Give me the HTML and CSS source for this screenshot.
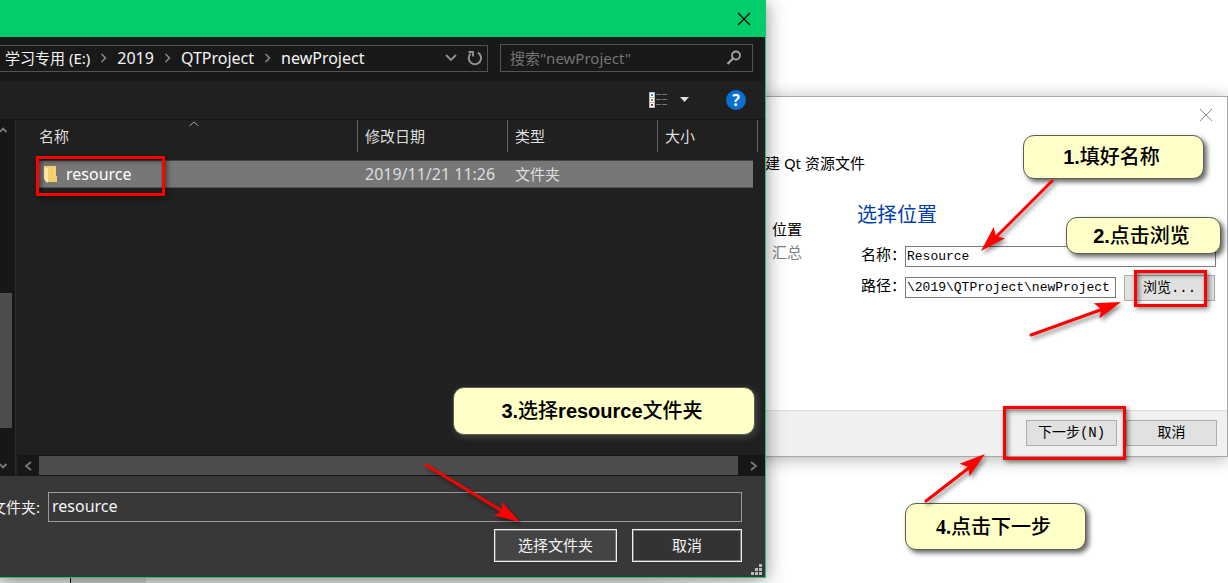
FILE: index.html
```html
<!DOCTYPE html>
<html lang="zh-CN">
<head>
<meta charset="utf-8">
<title>新建 Qt 资源文件</title>
<link rel="stylesheet" href="styles.css">
</head>
<body>
<main class="desktop">
  <div class="backdrop"><span class="backdrop-tab"></span></div>

  <section class="wizard" aria-label="新建 Qt 资源文件">
    <header class="wizard-top">
      <button class="icon-button" aria-label="关闭">
        <svg width="14" height="14" viewBox="0 0 14 14"><path d="M1 1l12 12M13 1L1 13" stroke="#8a8a8a" fill="none"/></svg>
      </button>
    </header>
    <h1 class="wizard-title">新建 Qt 资源文件</h1>
    <div class="wizard-body">
      <ol class="steps">
        <li>位置</li>
        <li class="step-pending">汇总</li>
      </ol>
      <form class="page">
        <h2 class="page-title">选择位置</h2>
        <div class="field">
          <label for="res-name">名称：</label>
          <input id="res-name" class="text-input" type="text" value="Resource">
        </div>
        <div class="field">
          <label for="res-path">路径：</label>
          <input id="res-path" class="text-input" type="text" value="\2019\QTProject\newProject">
          <button type="button" class="push-button">浏览...</button>
        </div>
      </form>
    </div>
    <footer class="wizard-footer">
      <button class="push-button">下一步(N)</button>
      <button class="push-button">取消</button>
    </footer>
  </section>

  <section class="picker" aria-label="选择文件夹">
    <header class="picker-title">
      <button class="icon-button" aria-label="关闭">
        <svg width="14" height="14" viewBox="0 0 14 14"><path d="M1 1l12 12M13 1L1 13" stroke="#000" stroke-width="1.2" fill="none"/></svg>
      </button>
    </header>
    <div class="address-row">
      <nav class="address" aria-label="路径">
        <a class="drive" href="#e">学习专用 (E:)</a>
        <svg class="crumb-sep" width="7" height="10" viewBox="0 0 7 10"><path d="M1.500 1l4 4-4 4" stroke="#8c8c8c" stroke-width="1.500" fill="none"/></svg>
        <a href="#2019">2019</a>
        <svg class="crumb-sep" width="7" height="10" viewBox="0 0 7 10"><path d="M1.500 1l4 4-4 4" stroke="#8c8c8c" stroke-width="1.500" fill="none"/></svg>
        <a href="#qt">QTProject</a>
        <svg class="crumb-sep" width="7" height="10" viewBox="0 0 7 10"><path d="M1.500 1l4 4-4 4" stroke="#8c8c8c" stroke-width="1.500" fill="none"/></svg>
        <a href="#new">newProject</a>
        <span class="address-tools">
          <button class="icon-button" aria-label="历史">
            <svg width="12" height="8" viewBox="0 0 12 8"><path d="M1 1l5 5 5-5" stroke="#929292" stroke-width="1.800" fill="none"/></svg>
          </button>
          <button class="icon-button" aria-label="刷新">
            <svg width="16" height="16" viewBox="0 0 16 16"><path d="M11 2.700A6.200 6.200 0 1 1 3.500 3.700" stroke="#929292" stroke-width="2" fill="none"/><path d="M1.500 2H6v4.500" stroke="#929292" stroke-width="1.800" fill="none"/></svg>
          </button>
        </span>
      </nav>
      <div class="search">
        <input type="search" aria-label="搜索" placeholder="搜索&quot;newProject&quot;">
        <svg width="16" height="16" viewBox="0 0 16 16"><circle cx="10" cy="5.500" r="4" stroke="#a5a5a5" stroke-width="1.800" fill="none"/><path d="M7 8.500L1.500 14" stroke="#a5a5a5" stroke-width="2.200"/></svg>
      </div>
    </div>
    <div class="toolbar">
      <button class="icon-button" aria-label="更改视图">
        <svg width="19" height="16" viewBox="0 0 19 16"><path d="M0 0h6v16H0z" fill="#b9b9b9"/><path d="M1 1h4v4H1zM1 6h4v4H1zM1 11h4v4H1z" fill="#fff"/><path d="M2 2h2v2H2z" fill="#3d83c4"/><path d="M2 7h2v2H2z" fill="#8a8f3a"/><path d="M2 12h2v2H2z" fill="#b5302a"/><path d="M7 2.500h5M13 2.500h5M7 7.500h5M13 7.500h5M7 12.500h5M13 12.500h5" stroke="#777"/></svg>
      </button>
      <button class="icon-button" aria-label="更多选项">
        <svg width="10" height="6" viewBox="0 0 10 6"><path d="M0 0h9L4.500 5z" fill="#dedede"/></svg>
      </button>
      <button class="help" aria-label="帮助">?</button>
    </div>
    <div class="browser">
      <div class="tree-scroll">
        <svg width="8" height="6" viewBox="0 0 8 6"><path d="M0 4.800L3 1.500l3.500 3.500" stroke="#7b7b7b" stroke-width="1.800" fill="none"/></svg>
        <span class="tree-thumb"></span>
        <svg width="8" height="6" viewBox="0 0 8 6"><path d="M0 1.200L3 4.500 6.500 1" stroke="#7b7b7b" stroke-width="1.800" fill="none"/></svg>
      </div>
      <div class="listing">
        <table class="files">
          <colgroup><col class="col-name"><col class="col-mid"><col class="col-mid"><col><col class="col-gutter"></colgroup>
          <thead>
            <tr>
              <th class="sorted">名称<svg class="sort-mark" width="10" height="6" viewBox="0 0 10 6"><path d="M.5 5l4.500-4 4.500 4" stroke="#a5a5a5" fill="none"/></svg></th>
              <th>修改日期</th><th>类型</th><th colspan="2">大小</th>
            </tr>
          </thead>
          <tbody>
            <tr>
              <td>
                <span class="file-name">
                  <svg width="14" height="18" viewBox="0 0 14 18"><path d="M0 1h12v10h1v6H4z" fill="#f3cf6b"/><path d="M0 1l4 3v14l-3-2V15L0 14z" fill="#ffe9a6"/><path d="M10 1h1v10h-1z" fill="#fbdc82"/></svg>
                  resource
                </span>
              </td>
              <td class="file-date">2019/11/21 11:26</td><td>文件夹</td><td></td><td class="gutter"></td>
            </tr>
          </tbody>
        </table>
        <div class="list-scroll">
          <svg width="8" height="10" viewBox="0 0 8 10"><path d="M7 1L2 5l5 4" stroke="#7b7b7b" stroke-width="1.800" fill="none"/></svg>
          <span class="list-thumb"></span>
          <svg width="8" height="10" viewBox="0 0 8 10"><path d="M1 1l5 4-5 4" stroke="#7b7b7b" stroke-width="1.800" fill="none"/></svg>
        </div>
      </div>
    </div>
    <footer class="picker-footer">
      <div class="folder-field">
        <label for="folder">文件夹:</label>
        <input id="folder" type="text" value="resource">
      </div>
      <div class="picker-actions">
        <button class="dark-button primary">选择文件夹</button>
        <button class="dark-button">取消</button>
      </div>
      <svg class="grip" width="12" height="12" viewBox="0 0 12 12"><path d="M8 0h3v3H8zM4 4h3v3H4zM8 4h3v3H8zM0 8h3v3H0zM4 8h3v3H4zM8 8h3v3H8z" fill="#bcbcbc"/></svg>
    </footer>
  </section>

  <span class="mark mark-folder"></span>
  <span class="mark mark-browse"></span>
  <span class="mark mark-next"></span>

  <p class="callout callout-name"><span><b>1.</b>填好名称</span></p>
  <p class="callout callout-browse"><span><b>2.</b>点击浏览</span></p>
  <p class="callout callout-folder"><span><b>3.</b>选择<b>resource</b>文件夹</span></p>
  <p class="callout callout-next"><span><b>4.</b>点击下一步</span></p>

  <svg class="arrows" width="1228" height="583" viewBox="0 0 1228 583" aria-hidden="true">
    <defs><path id="head" d="M0 0L-26-8-21 0-26 8z"/></defs>
    <g fill="#f00" stroke="none">
      <use href="#head" transform="translate(981 251) rotate(135)"/>
      <use href="#head" transform="translate(1121 302) rotate(-20)"/>
      <use href="#head" transform="translate(520 522) rotate(31)"/>
      <use href="#head" transform="translate(985 454) rotate(-38)"/>
    </g>
    <path d="M1052 181L996 237M1031 335L1103 309M426 465L502 511M926 501L970 467" stroke="#f00" stroke-width="3" stroke-linecap="round" fill="none"/>
  </svg>
</main>
</body>
</html>
```
FILE: styles.css
```css
* { box-sizing: border-box; }

body {
  margin: 0;
  background: #fff;
  font-family: "Noto Sans", "Noto Sans CJK SC", sans-serif;
  font-size: 15px;
  line-height: 20px;
}

h1, h2, p, ol { margin: 0; padding: 0; font-weight: normal; }
ol { list-style: none; }
button, input { font: inherit; color: inherit; margin: 0; border-radius: 0; }
a { color: inherit; text-decoration: none; }
svg { display: block; flex: none; }

.desktop {
  position: relative;
  min-height: 100vh;
  overflow: hidden;
}

.icon-button {
  display: flex;
  padding: 0;
  border: 0;
  background: none;
}

.backdrop {
  position: absolute;
  left: 0;
  bottom: 0;
  width: 750px;
  height: 6px;
  padding-left: 70px;
  background: linear-gradient(to right, #e9e9e9 85%, #fff);
}
.backdrop-tab {
  display: block;
  width: 76px;
  height: 6px;
  border-left: 1px solid #111;
  background: #d0d0d0;
}

/* Wizard window */
.wizard {
  position: absolute;
  left: 748px;
  top: 96px;
  width: 480px;
  border: 1px solid #a8a8a8;
  background: #fff;
  box-shadow: 0 2px 16px rgba(0, 0, 0, .3);
}
.wizard-top {
  display: flex;
  justify-content: flex-end;
  padding: 11px 14px 0;
}
.wizard-title {
  padding: 31px 0 0 1px;
  font-size: 15px;
  line-height: 20px;
}
.wizard-body {
  display: flex;
  gap: 55px;
  padding: 30px 11px 0 23px;
  font-family: "Liberation Mono", "Noto Sans CJK SC", monospace;
}
.steps {
  padding-top: 17px;
  line-height: 23px;
}
.step-pending { color: #808080; }
.page { flex: 1; }
.page-title {
  margin-bottom: 10px;
  color: #003fad;
  font-size: 20px;
  line-height: 28px;
}
.field {
  display: flex;
  align-items: center;
  height: 31px;
  padding-left: 4px;
}
.field label { width: 44px; white-space: nowrap; }
.text-input {
  flex: 1;
  min-width: 0;
  height: 21px;
  padding: 0 1px;
  border: 1px solid #7a7a7a;
  background: #fff;
  font-size: 13px;
}
.push-button {
  width: 91px;
  height: 26px;
  padding: 0;
  border: 1px solid #adadad;
  background: #e1e1e1;
  font-size: 14px;
}
.field .push-button { margin: 0 1px 0 8px; }
.wizard-footer {
  display: flex;
  justify-content: flex-end;
  gap: 9px;
  margin-top: 107px;
  padding: 9px 10px 10px;
  border-top: 1px solid #dfdfdf;
  background: #f0f0f0;
  font-family: "Liberation Mono", "Noto Sans CJK SC", monospace;
}

/* Folder picker window */
.picker {
  position: absolute;
  left: 0;
  top: 0;
  width: 766px;
  border: solid #2bbd78;
  border-width: 0 1px 1px 0;
  background: #202020;
  color: #f5f5f5;
  box-shadow: 0 2px 18px rgba(0, 0, 0, .45);
}
.picker-title {
  display: flex;
  align-items: center;
  justify-content: flex-end;
  height: 37px;
  padding-right: 14px;
  background: #03cd6b;
}
.address-row {
  display: flex;
  align-items: center;
  gap: 12px;
  height: 44px;
  padding: 0 12px 2px 0;
  background: #191919;
}
.address {
  display: flex;
  flex: 1;
  align-items: center;
  height: 27px;
  padding: 0 4px 1px 5px;
  border: solid #535353;
  border-width: 1px 1px 1px 0;
  font-size: 16px;
  white-space: nowrap;
}
.address .drive { font-size: 15px; }
.crumb-sep { margin: 0 10px; }
.address-tools {
  display: flex;
  align-items: center;
  gap: 10px;
  margin-left: auto;
}
.search {
  display: flex;
  align-items: center;
  width: 253px;
  height: 28px;
  padding: 0 10px 0 9px;
  border: 1px solid #535353;
}
.search input {
  flex: 1;
  min-width: 0;
  padding: 0;
  border: 0;
  outline: 0;
  background: none;
}
.search input::placeholder { color: #747474; opacity: 1; }
.toolbar {
  display: flex;
  align-items: center;
  justify-content: flex-end;
  height: 39px;
  padding-right: 19px;
  border-bottom: 1px solid #171717;
}
.toolbar .icon-button { margin-right: 12px; }
.help {
  width: 20px;
  height: 20px;
  margin-left: 24px;
  padding: 0;
  border: 0;
  border-radius: 50%;
  background: #0a6fd0;
  color: #fff;
  font-size: 16px;
  font-weight: bold;
  line-height: 20px;
}
.browser {
  display: flex;
  height: 356px;
}
.tree-scroll {
  display: flex;
  flex-direction: column;
  width: 16px;
  padding: 7px 0;
  border-right: 1px solid #2b2b2b;
  background: #171717;
}
.tree-thumb {
  width: 12px;
  height: 135px;
  margin: auto 0 35px;
  background: #4d4d4d;
}
.listing {
  display: flex;
  flex: 1;
  flex-direction: column;
  justify-content: space-between;
}
.files {
  width: 721px;
  margin-left: 21px;
  border-spacing: 0;
  table-layout: fixed;
}
.col-name { width: 321px; }
.col-mid { width: 150px; }
.col-gutter { width: 5px; }
.files th {
  height: 32px;
  padding: 0 0 0 7px;
  border-right: 1px solid #636363;
  color: #dedede;
  font-weight: normal;
  text-align: left;
}
.files th.sorted { position: relative; padding-left: 2px; }
.sort-mark { position: absolute; left: 152px; top: 1px; }
.files tbody::before {
  display: block;
  height: 8px;
  content: "";
}
.files td {
  height: 28px;
  padding: 0 0 0 7px;
  border-top: 1px solid #444;
  border-bottom: 1px solid #555;
  background: #777;
  color: #dedede;
  white-space: nowrap;
}
.files td.gutter {
  padding: 0;
  border: 0;
  background: none;
}
.file-name {
  display: flex;
  align-items: center;
  gap: 8px;
  color: #fff;
}
.file-name, .files .file-date { font-size: 16px; }
.list-scroll {
  display: flex;
  align-items: center;
  height: 21px;
  margin-left: 2px;
  padding: 0 7px 0 6px;
  border: solid #151515;
  border-width: 1px 0;
  background: #171717;
}
.list-thumb {
  flex: 1;
  align-self: stretch;
  margin: 0 12px 0 7px;
  background: #4d4d4d;
}
.picker-footer {
  position: relative;
  padding: 16px 23px 15px 0;
  background: #383838;
}
.folder-field { display: flex; align-items: center; }
.folder-field label {
  display: flex;
  justify-content: flex-end;
  width: 40px;
  margin-right: 8px;
  white-space: nowrap;
}
.folder-field input {
  flex: 1;
  height: 30px;
  padding: 0 3px 3px;
  border: 1px solid #9b9b9b;
  background: #383838;
  font-size: 16px;
}
.picker-actions {
  display: flex;
  justify-content: flex-end;
  gap: 15px;
  margin-top: 7px;
}
.dark-button {
  width: 110px;
  height: 33px;
  padding: 0 0 2px;
  border: 1px solid #f0f0f0;
  outline: 1px solid #777;
  outline-offset: -2px;
  background: #333;
}
.dark-button.primary { width: 123px; background: #444; }
.grip { position: absolute; right: 2px; bottom: 1px; }

/* Annotations */
.mark {
  position: absolute;
  border: 3px solid #f00;
  box-shadow: 2px 2px 5px rgba(0, 0, 0, .5), inset 2px 2px 5px rgba(0, 0, 0, .5);
}
.mark-folder { left: 36px; top: 156px; width: 129px; height: 40px; }
.mark-browse { left: 1134px; top: 270px; width: 73px; height: 37px; }
.mark-next { left: 1003px; top: 406px; width: 123px; height: 54px; }

.callout {
  position: absolute;
  display: flex;
  align-items: center;
  justify-content: center;
  padding-right: 4px;
  border: 1px solid #5e5e4e;
  border-radius: 11px;
  background: #ffffc8;
  box-shadow: 3px 3px 5px rgba(0, 0, 0, .6);
  color: #000;
  font-family: "Liberation Sans", "Noto Sans CJK SC", sans-serif;
  font-size: 20px;
  font-weight: 500;
  line-height: 28px;
  white-space: nowrap;
}
.callout-name { left: 1023px; top: 135px; width: 181px; height: 44px; }
.callout-browse { left: 1066px; top: 217px; width: 155px; height: 37px; }
.callout-folder {
  left: 453px;
  top: 387px;
  width: 302px;
  height: 48px;
  box-shadow: 2px 2px 7px rgba(110, 110, 110, .5);
}
.callout-next {
  left: 905px;
  top: 503px;
  width: 181px;
  height: 47px;
  font-family: "Liberation Serif", "Noto Sans CJK SC", serif;
}

.arrows {
  position: absolute;
  left: 0;
  top: 0;
  pointer-events: none;
  filter: drop-shadow(2px 3px 2px rgba(0, 0, 0, .45));
}
```
